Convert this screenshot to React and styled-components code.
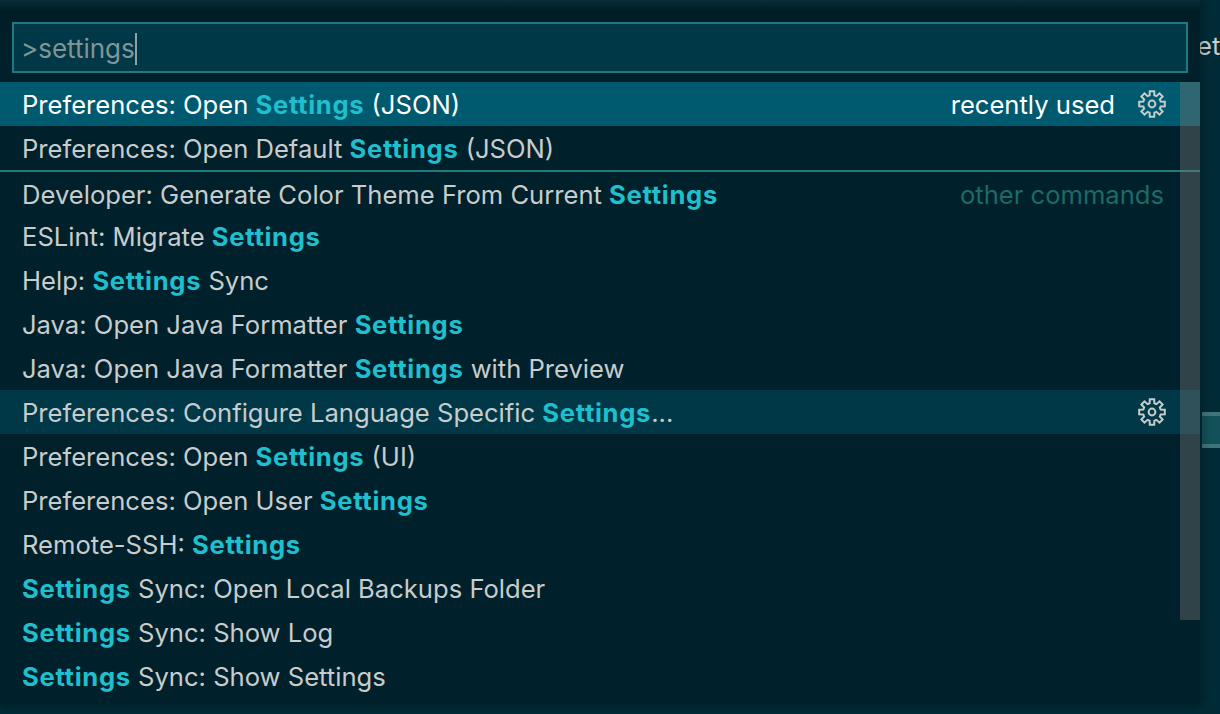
import React from 'react';
import styled, { createGlobalStyle } from 'styled-components';

const rows = [
  { label: ['Preferences: Open ', '*Settings', ' (JSON)'], active: true, note: 'recently used', gear: true },
  { label: ['Preferences: Open Default ', '*Settings', ' (JSON)'] },
  { label: ['Developer: Generate Color Theme From Current ', '*Settings'], note: 'other commands', separated: true },
  { label: ['ESLint: Migrate ', '*Settings'] },
  { label: ['Help: ', '*Settings', ' Sync'] },
  { label: ['Java: Open Java Formatter ', '*Settings'] },
  { label: ['Java: Open Java Formatter ', '*Settings', ' with Preview'] },
  { label: ['Preferences: Configure Language Specific ', '*Settings', '...'], hovered: true, gear: true },
  { label: ['Preferences: Open ', '*Settings', ' (UI)'] },
  { label: ['Preferences: Open User ', '*Settings'] },
  { label: ['Remote-SSH: ', '*Settings'] },
  { label: ['*Settings', ' Sync: Open Local Backups Folder'] },
  { label: ['*Settings', ' Sync: Show Log'] },
  { label: ['*Settings', ' Sync: Show Settings'] },
];

// 8 tooth gear outline, tooth on top
const gearPath = () => {
  const pts = [];
  for (let i = 0; i < 8; i++) {
    const a = (i * Math.PI) / 4 - Math.PI / 2;
    [[-0.27, 9], [-0.17, 13], [0.17, 13], [0.27, 9]].forEach(([d, r]) => {
      pts.push(`${(14 + r * Math.cos(a + d)).toFixed(2)} ${(14 + r * Math.sin(a + d)).toFixed(2)}`);
    });
  }
  return `M${pts.join('L')}Z`;
};

const GearIcon = () => (
  <GearSvg viewBox="0 0 28 28">
    <path d={gearPath()} />
    <circle cx="14" cy="14" r="3.4" />
  </GearSvg>
);

const App = () => (
  <Page>
    <GlobalStyle />
    <Palette>
      <InputBox>
        <InputText>&gt;settings</InputText>
        <Caret />
      </InputBox>
      <ListWrap>
        <List>
          {rows.map((row, i) => (
            <Row key={i} $active={row.active} $hovered={row.hovered} $separated={row.separated}>
              <Label $separated={row.separated}>
                {row.label.map((part, j) =>
                  part[0] === '*' ? <Match key={j}>{part.slice(1)}</Match> : <span key={j}>{part}</span>
                )}
              </Label>
              {row.note && <Note $active={row.active} $separated={row.separated}>{row.note}</Note>}
              {row.gear && <GearIcon />}
            </Row>
          ))}
        </List>
        <Scrollbar />
      </ListWrap>
    </Palette>
    <Behind>
      <BehindText>et</BehindText>
      <BehindBlock />
    </Behind>
  </Page>
);

const GlobalStyle = createGlobalStyle`
  html, body {
    margin: 0;
    padding: 0;
    background: #002b36;
  }
`;

const Page = styled.div`
  display: flex;
  width: 1220px;
  height: 714px;
  overflow: hidden;
  background: #002b36;
  font-family: Inter, "Noto Sans", sans-serif;
`;

const Palette = styled.div`
  position: relative;
  z-index: 1;
  flex: 0 0 1200px;
  height: 704px;
  overflow: hidden;
  background: linear-gradient(#0a2e39, #001d27 10px, #00212b 60px);
  box-shadow: 0 0 10px rgba(0, 0, 0, 0.45);
`;

const InputBox = styled.div`
  display: flex;
  align-items: center;
  box-sizing: border-box;
  width: 1176px;
  height: 51px;
  margin: 22px 12px 9px;
  padding: 2px 7px 0;
  background: #003847;
  border: 2px solid #207a7b;
`;

const InputText = styled.span`
  font-size: 26px;
  color: #839496;
`;

const Caret = styled.span`
  width: 2px;
  height: 32px;
  background: #8fa3a5;
`;

const ListWrap = styled.div`
  position: relative;
  width: 1200px;
`;

const List = styled.div`
  display: flex;
  flex-direction: column;
`;

const Row = styled.div`
  display: flex;
  align-items: center;
  box-sizing: border-box;
  height: 44px;
  padding: 0 34px 0 22px;
  color: ${(p) => (p.$active ? '#ffffff' : '#c8cccc')};
  background: ${(p) => (p.$active ? '#005a6f' : p.$hovered ? '#003847' : 'transparent')};
  border-top: ${(p) => (p.$separated ? '2px solid #207a7b' : 'none')};
`;

const Label = styled.div`
  flex: 1;
  padding-top: ${(p) => (p.$separated ? '2px' : '0')};
  font-size: 25.6px;
  white-space: pre;
`;

const Match = styled.span`
  font-weight: 700;
  letter-spacing: 0.7px;
  color: #1fbfcd;
`;

const Note = styled.span`
  padding-top: ${(p) => (p.$separated ? '2px' : '0')};
  margin-right: ${(p) => (p.$separated ? '2px' : '0')};
  font-size: 25.6px;
  color: ${(p) => (p.$active ? '#ffffff' : '#1d6a66')};
`;

const GearSvg = styled.svg`
  width: 28px;
  height: 28px;
  margin-left: 23px;
  fill: none;
  stroke: #c5cccc;
  stroke-width: 2;
`;

const Scrollbar = styled.div`
  position: absolute;
  top: 0;
  right: 0;
  width: 20px;
  height: 538px;
  background: rgba(121, 121, 121, 0.4);
`;

const Behind = styled.div`
  display: flex;
  flex-direction: column;
  flex: 1;
  padding-top: 30px;
`;

const BehindText = styled.div`
  margin-left: -3px;
  font-size: 25.6px;
  color: #c8cccc;
`;

const BehindBlock = styled.div`
  box-sizing: border-box;
  height: 36px;
  margin-top: 351px;
  margin-left: 2px;
  background: #12505a;
  border-top: 4px solid #3f747a;
  border-bottom: 4px solid #3f747a;
`;

export default App;
